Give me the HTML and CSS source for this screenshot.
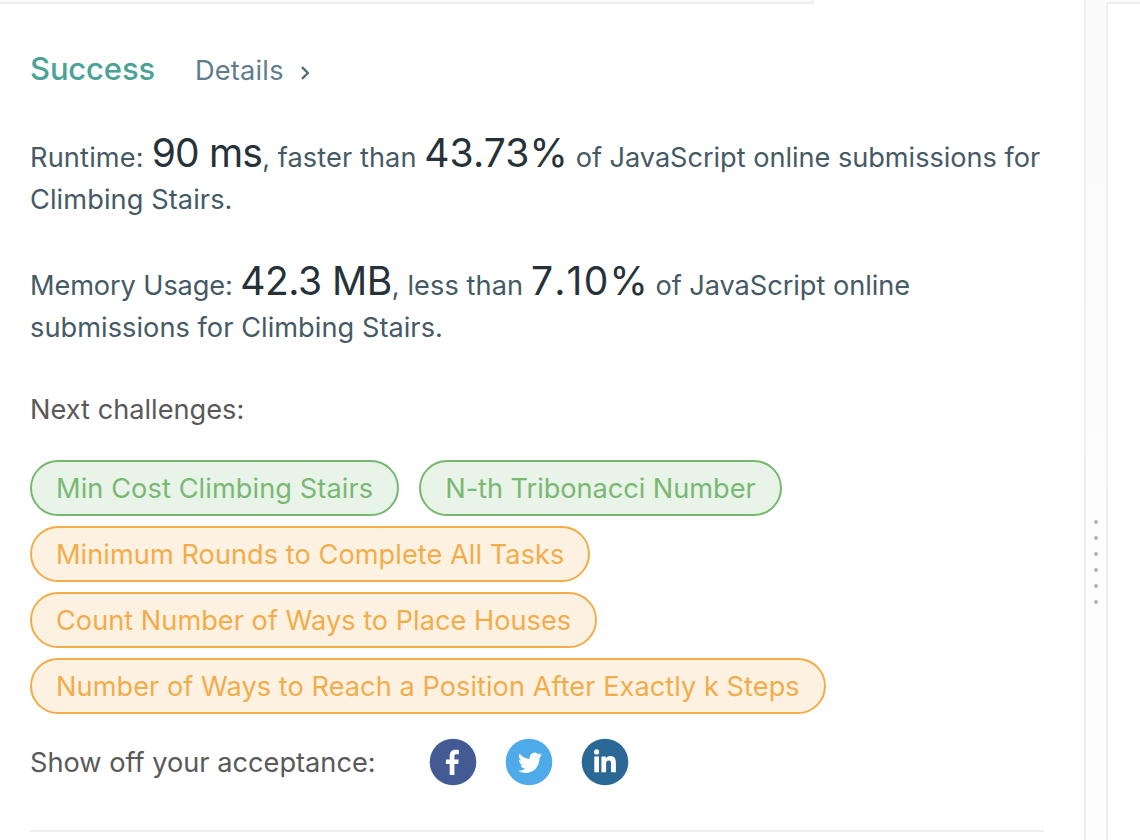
FILE: index.html
```html
<!DOCTYPE html>
<html lang="en">
<head>
<meta charset="utf-8">
<title>Submission result</title>
<link rel="stylesheet" href="styles.css">
</head>
<body>
<div class="workspace">
  <main class="result">
    <div class="tabbar"></div>
    <header class="status"><span class="success">Success</span><a class="details">Details<svg class="chevron" width="11" height="16" viewBox="0 0 11 16"><path d="M2 2.2L7.8 8 2 13.8"/></svg></a></header>
    <p class="stat"><span class="line"><span class="looser">Runtime: </span><b class="runtime">90 ms</b><span class="loose">, faster than</span> <b>43.73%</b><span class="tight"> of JavaScript online submissions for</span></span><span class="line loose">Climbing Stairs.</span></p>
    <p class="stat"><span class="line"><span class="tighter">Memory Usage: </span><b class="memory">42.3 MB</b><span class="loose">, less than</span> <b class="percent">7.10%</b><span class="tight"> of JavaScript online</span></span><span class="line loosish">submissions for Climbing Stairs.</span></p>
    <h2 class="next">Next challenges:</h2>
    <div class="tags">
      <div class="row"><a class="tag easy loose">Min Cost Climbing Stairs</a><a class="tag easy tight">N-th Tribonacci Number</a></div>
      <a class="tag medium loosish">Minimum Rounds to Complete All Tasks</a>
      <a class="tag medium">Count Number of Ways to Place Houses</a>
      <a class="tag medium loosish">Number of Ways to Reach a Position After Exactly k Steps</a>
    </div>
    <div class="share"><span class="label">Show off your acceptance:</span>
      <svg class="social" viewBox="0 0 48 48"><circle cx="24" cy="24" r="23.3" fill="#435a94"/><path fill="#fff" d="M20.7 37V26h-3.8v-4.6h3.8v-3.6c0-4 2.3-6.1 5.9-6.1 1.4 0 2.5.1 3.2.2v4.4h-2.4c-1.7 0-2 .8-2 2v3.1h4.3l-.5 4.6h-3.8v11z"/></svg>
      <svg class="social" viewBox="0 0 48 48"><circle cx="24" cy="24" r="23.3" fill="#4eaae8"/><path fill="#fff" transform="translate(13 12.2) scale(1 1.05)" d="M23.95 4.57a10 10 0 0 1-2.82.77 4.96 4.96 0 0 0 2.16-2.72c-.95.55-2 .96-3.13 1.18a4.92 4.92 0 0 0-8.38 4.48A13.93 13.93 0 0 1 1.64 3.16a4.92 4.92 0 0 0 1.52 6.57 4.9 4.9 0 0 1-2.23-.62v.06a4.92 4.92 0 0 0 3.95 4.83 5 5 0 0 1-2.21.08 4.94 4.94 0 0 0 4.6 3.42A9.87 9.87 0 0 1 0 19.54a14 14 0 0 0 7.56 2.21c9.05 0 14-7.5 14-13.98l-.02-.63a9.94 9.94 0 0 0 2.41-2.57z"/></svg>
      <svg class="social" viewBox="0 0 48 48"><circle cx="24" cy="24" r="23.3" fill="#2b6896"/><path fill="#fff" d="M13.3 18.4H18v15.8h-4.7zM15.6 11.3a2.6 2.6 0 1 1 0 5.2 2.6 2.6 0 0 1 0-5.2zM20.4 18.4h4.5v2.1c.8-1.4 2.3-2.5 4.4-2.5 4.5 0 5.6 3 5.6 7.3v8.9h-4.8v-7.7c0-1.9-.1-4-2.4-4s-2.6 1.9-2.6 3.8v7.9h-4.7z"/></svg>
    </div>
    <div class="rule"></div>
  </main>
  <div class="splitter"><i></i><i></i><i></i><i></i><i></i><i></i></div>
  <div class="editor"></div>
</div>
</body>
</html>
```
FILE: styles.css
```css
* { box-sizing: border-box; }
body { margin: 0; background: #fff; color: #455a64; font: 400 27.2px/42px Inter, sans-serif; }
.workspace { display: flex; height: 840px; overflow: hidden; }
.result { width: 1084px; padding: 0 30px; white-space: nowrap; }
.tabbar { width: 814px; height: 4px; margin-left: -30px; background: #fafafa; border: solid #eee; border-width: 0 2px 2px 0; }
.status { display: flex; height: 42px; margin-top: 45px; align-items: center; }
.success { width: 165px; margin-top: -2px; color: #4ba297; font-size: 31px; font-weight: 500; letter-spacing: -.15px; }
.details { display: flex; align-items: center; margin-top: 2px; color: #607d8b; letter-spacing: .2px; }
.chevron { margin: 3px 0 0 16px; fill: none; stroke: #546e7a; stroke-width: 2.4; }
.stat { margin: 46px 0 0; height: 82px; }
.line { display: block; height: 42px; }
.looser { letter-spacing: .15px; }
.loose { letter-spacing: .08px; }
.loosish { letter-spacing: .035px; }
.tight { letter-spacing: -.05px; }
.tighter { letter-spacing: -.12px; }
b { color: #263238; font-size: 39px; font-weight: 400; line-height: 0; letter-spacing: .15px; }
.runtime { letter-spacing: -.8px; }
.memory { letter-spacing: -.5px; }
.percent { font-kerning: none; letter-spacing: 1.2px; margin-right: -1.2px; }
.next { margin: 42px 0 29px; font-size: 27.2px; font-weight: 400; color: #595959; }
.tags, .row { display: flex; gap: 10px; }
.tags { flex-direction: column; align-items: flex-start; }
.row { gap: 20px; }
.tag { height: 56px; padding: 0 24px; border: 2px solid; border-radius: 28px; line-height: 53px; }
.easy { color: #7bb774; background: #e8f4e8; border-color: #77b86f; }
.medium { color: #f3ac4a; background: #fdf2e2; border-color: #f3ac48; }
.share { display: flex; align-items: center; margin-top: 24px; color: #595959; }
.label { width: 399px; padding-top: 2px; }
.social { width: 48px; height: 48px; margin-right: 28px; }
.rule { width: 1014px; height: 2px; margin-top: 44px; background: #eee; }
.splitter { display: flex; width: 22px; flex-direction: column; align-items: center; gap: 12px; padding-top: 520px; border-left: 2px solid #eee; background: linear-gradient(#fafafa, #fafafa 120px, #fdfdfd 500px); }
.splitter i { width: 4px; height: 4px; border-radius: 50%; background: #b0bac1; }
.editor { flex: 1; margin-top: 2px; border: solid #eee; border-width: 2px 0 0 2px; box-shadow: 0 -2px #fafafa; }
```
